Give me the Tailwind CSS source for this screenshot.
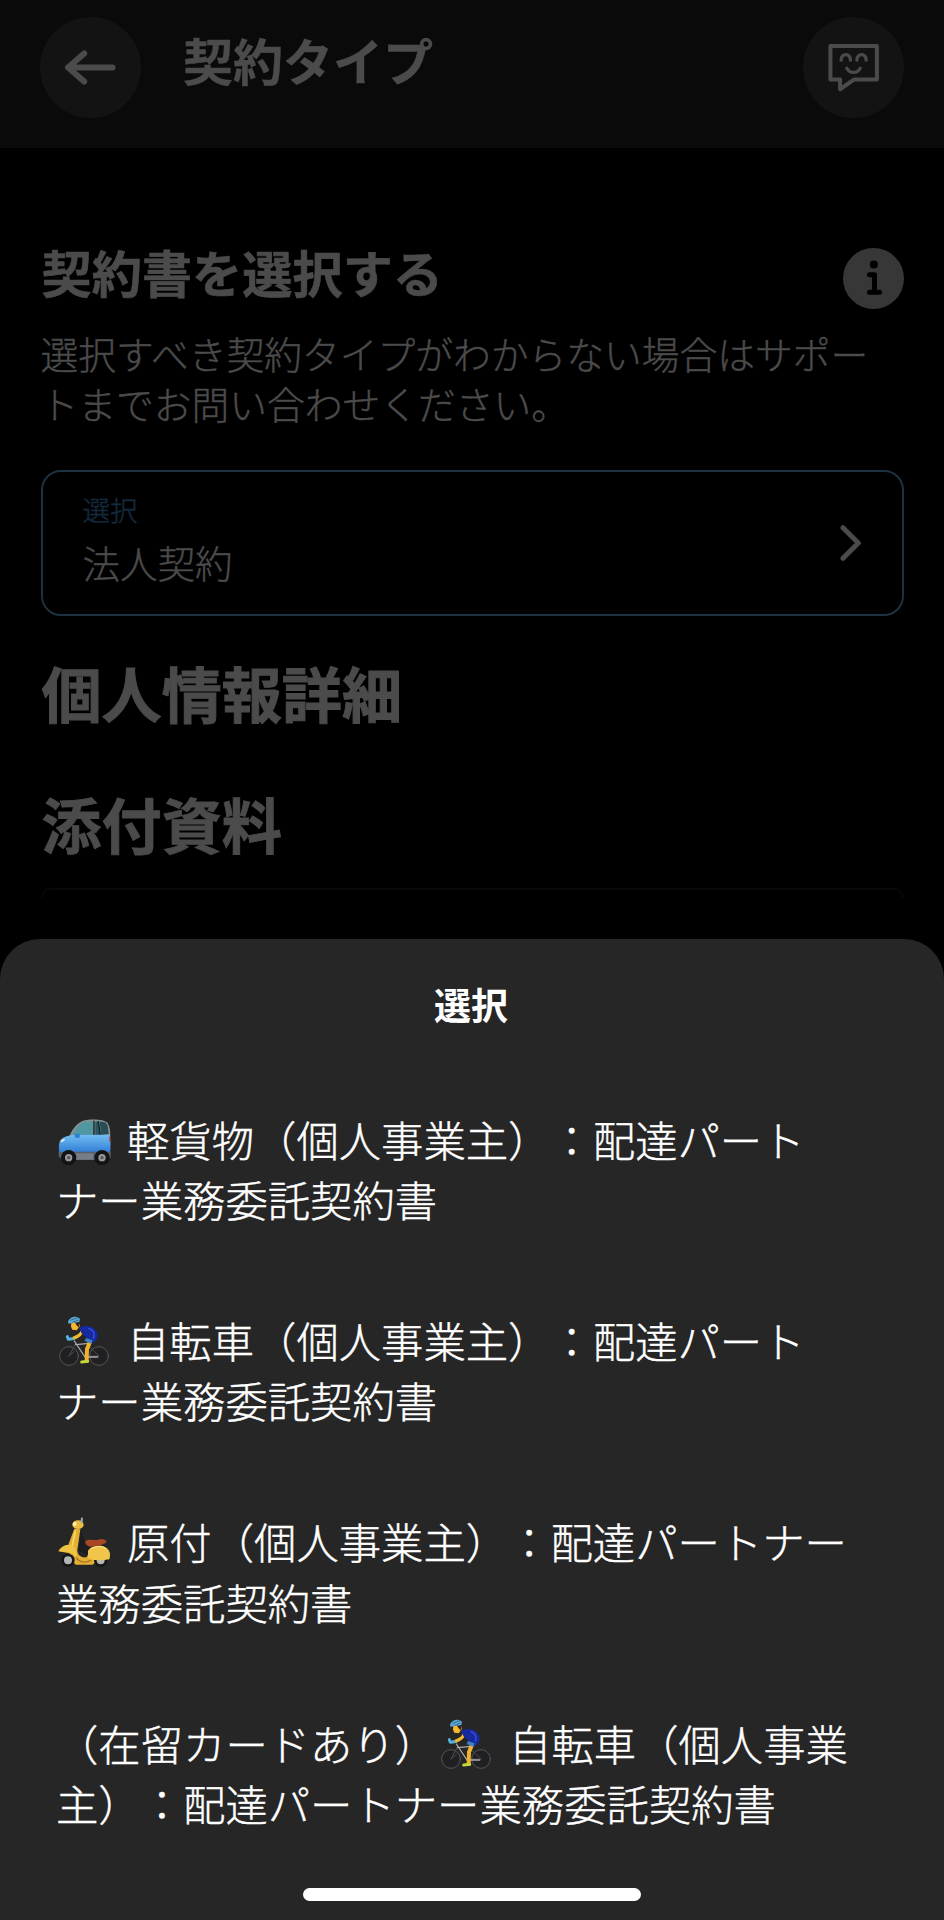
<!DOCTYPE html>
<html lang="ja">
<head>
    <meta charset="UTF-8">
    <meta name="viewport" content="width=device-width, initial-scale=1.0">
    <title>契約タイプ</title>
    <script src="https://cdn.jsdelivr.net/npm/@tailwindcss/browser@4"></script>
</head>
<body class="relative bg-black text-[#4b4b4b] font-['Noto_Sans_CJK_JP',sans-serif] h-[1920px] w-[944px] overflow-hidden [text-spacing-trim:space-all]">

    <!-- Shared icons -->
    <svg class="hidden">
        <symbol id="cyclist" viewBox="51 42 162 156">
            <g fill="none" stroke-linecap="round" stroke-linejoin="round">
                <g stroke="#55565a" stroke-width="3">
                    <circle cx="87" cy="168" r="28" fill="#202022" />
                    <circle cx="177" cy="168" r="28" fill="#202022" />
                </g>
                <path d="M87 168l20-37M87 168l16-14M177 168l-29-28M177 168h-32" stroke="#4a4b4f" stroke-width="3" />
                <path d="M103 123l32 48 17-42M107 134l41-4M135 171h38" stroke="#aaabb0" stroke-width="4" />
                <path d="M150 125l-9 22-1 36" stroke="#f2b229" stroke-width="12" />
                <path d="M125 186l18-2" stroke="#c5d63b" stroke-width="9" />
                <path d="M127 90c-2 12-8 18-27 25" stroke="#f2b92e" stroke-width="10" />
                <path d="M82 110l3 8 12-2" stroke="#55b2df" stroke-width="9" />
            </g>
            <path d="M117 83c22-10 43-4 52 11 9 15 2 26-9 35l-24-7c5-7 4-11-2-15-8-4-13-13-17-24z" fill="#16299f" />
            <path d="M145 85c15 4 21 16 15 31" fill="none" stroke="#3953dc" stroke-width="4" />
            <path d="M138 114l20 7-4 10-20-8z" fill="#3b82bf" />
            <path d="M94 68l22-3 4 13-10 13-13-2-4-9z" fill="#f4b72d" />
            <path d="M103 66l16-1-2 18-7-7z" fill="#35251c" />
            <path d="M84 66c3-14 25-22 36-9l-2 9-32 5z" fill="#5ba9d6" />
            <path d="M91 61l23-8M97 67l19-7" stroke="#244f6c" stroke-width="2" />
        </symbol>
    </svg>

    <!-- Header -->
    <header class="flex items-start h-[147.5px] bg-[#0a0a0a] px-[40px] pt-[17px]">
        <svg class="w-[101px] h-[101px]" viewBox="121 50 302 302" fill="none">
            <circle cx="272" cy="201" r="151" fill="#131313" />
            <path d="M338 201H205M253 159l-48 42 48 42" stroke="#4b4b4b" stroke-width="18" stroke-linecap="round" stroke-linejoin="round" />
        </svg>
        <h1 class="ml-[42px] mt-[17px] text-[50px] leading-[50px] font-bold [-webkit-text-stroke:0.4px_#4b4b4b]">契約タイプ</h1>
        <svg class="ml-auto w-[101px] h-[101px]" viewBox="69 50 302 302" fill="none" stroke="#4b4b4b" stroke-linecap="round" stroke-linejoin="round">
            <circle cx="220" cy="201" r="151" fill="#131313" stroke="none" />
            <path d="M151 137h139v100h-69l-41 29v-29h-29z" stroke-width="12" />
            <path d="M183 179c1-22 27-22 28 0M230 179c1-22 27-22 28 0M200 203c9 17 31 17 40 0" stroke-width="10" />
        </svg>
    </header>

    <main class="flex flex-col px-[40.5px] pt-[98.5px]">
        <div class="flex items-start justify-between">
            <h2 class="pl-px text-[50.2px] leading-[50px] font-bold [-webkit-text-stroke:0.6px_#4b4b4b]">契約書を選択する</h2>
            <svg class="mt-[2px] w-[61px] h-[61px]" viewBox="1090 55 182 182" fill="none">
                <circle cx="1181" cy="146" r="91" fill="#373737" />
                <circle cx="1182" cy="104" r="12" fill="#000" />
                <path d="M1169 135h15v52M1169 187h30" stroke="#000" stroke-width="15" stroke-linecap="round" stroke-linejoin="round" />
            </svg>
        </div>
        <p class="mt-[18.5px] text-[37.75px] leading-[50.5px] font-light whitespace-nowrap [-webkit-text-stroke:0.4px_#4b4b4b]">選択すべき契約タイプがわからない場合はサポー<br>トまでお問い合わせください。</p>

        <!-- Contract select -->
        <div class="mt-[41px] flex items-center justify-between h-[146px] rounded-[20px] border-2 border-[#1d3240] px-10">
            <div class="font-light">
                <div class="text-[27.5px] leading-[36px] text-[#142a3e] [-webkit-text-stroke:0.4px_#142a3e]">選択</div>
                <div class="mt-[10px] mb-[8px] text-[37.5px] leading-[50px] [-webkit-text-stroke:0.4px_#4b4b4b]">法人契約</div>
            </div>
            <svg class="w-[22px] h-9" viewBox="181 196 66 108" fill="none">
                <path d="M190 204l46 46-46 46" stroke="#4b4b4b" stroke-width="15" stroke-linecap="round" stroke-linejoin="round" />
            </svg>
        </div>

        <h2 class="mt-[46px] pl-px text-[60.1px] leading-[60px] font-bold [-webkit-text-stroke:1px_#4b4b4b]">個人情報詳細</h2>
        <h2 class="mt-[71px] pl-px text-[60.1px] leading-[60px] font-bold [-webkit-text-stroke:0.8px_#4b4b4b]">添付資料</h2>
        <div class="mt-[35px] h-[10px] rounded-t-[10px] border-2 border-b-0 border-[#080808]"></div>
    </main>

    <!-- Bottom sheet -->
    <section class="absolute inset-x-0 bottom-0 h-[981.5px] rounded-t-[40px] bg-[#262626] text-white">
        <h3 class="pt-[40px] pr-[2px] text-center text-[37px] leading-[50px] font-bold">選択</h3>
        <ul class="mt-[80px] ml-[56px] flex flex-col gap-[80.4px] text-[42.35px] leading-[60.5px] font-light whitespace-nowrap [-webkit-text-stroke:0.4px_#fff]">
            <li>
                <div class="flex items-center">
                    <svg class="ml-px w-[54px] h-[52px] mr-4" viewBox="51 39 162 156">
                        <defs>
                            <linearGradient id="paint" x1="0" y1="0" x2="0" y2="1">
                                <stop offset="0" stop-color="#72bdf4" />
                                <stop offset="1" stop-color="#2b78d2" />
                            </linearGradient>
                        </defs>
                        <path d="M88 108c13-29 30-45 51-48 27-3 54-1 64 9 7 11 8 26 8 41z" fill="#819193" />
                        <path d="M98 107c11-25 22-40 42-42h21v43z" fill="#4f98a1" />
                        <path d="M166 65h9l6 39-15 3z" fill="#285563" />
                        <path d="M179 65c18 0 21 4 24 13l3 24-22 3z" fill="#294d55" />
                        <path d="M162 62v47M175 63l6 42" stroke="#171d20" stroke-width="4" />
                        <path d="M58 128c4-14 17-20 40-23l111-1c4 18 3 38 1 57l-151 1c-3-10-3-24-1-34z" fill="url(#paint)" />
                        <path d="M56 155h156v17l-12 8H67l-11-11z" fill="#58616b" />
                        <path d="M103 160h57v19h-57z" fill="#777d84" />
                        <ellipse cx="112" cy="107" rx="8" ry="7" fill="#2f83cf" />
                        <path d="M61 126c3-8 9-10 14-8-2 6-7 9-14 8z" fill="#dbe9ef" />
                        <path d="M208 110h4v14h-4z" fill="#b22d25" />
                        <g fill="#98999b" stroke="#121314" stroke-width="12">
                            <circle cx="86" cy="173" r="17" />
                            <circle cx="186" cy="173" r="17" />
                        </g>
                        <circle cx="86" cy="173" r="5" fill="#55575a" />
                        <circle cx="186" cy="173" r="5" fill="#55575a" />
                    </svg>
                    <span>軽貨物（個人事業主）：配達パート</span>
                </div>
                <div>ナー業務委託契約書</div>
            </li>
            <li>
                <div class="flex items-center">
                    <svg class="ml-px w-[54px] h-[52px] mr-4"><use href="#cyclist" /></svg>
                    <span>自転車（個人事業主）：配達パート</span>
                </div>
                <div>ナー業務委託契約書</div>
            </li>
            <li>
                <div class="flex items-center">
                    <svg class="ml-px w-[54px] h-[52px] mr-4" viewBox="51 48 162 156">
                        <path d="M123 92l-7 62 26 10 12-32-18-4z" fill="#1d1d1e" />
                        <path d="M103 86l18 2-9 62c0 16 12 24 28 22l12-24 40 10-18 22-16 14h-50c-12-6-14-24-20-34l-33-6c4-10 16-18 30-20z" fill="#e3b033" />
                        <g fill="#b5b5b6" stroke="#151617" stroke-width="8">
                            <circle cx="84" cy="181" r="16" />
                            <circle cx="182" cy="181" r="16" />
                        </g>
                        <path d="M106 92l-9 45c-3 12 2 22 11 29" fill="none" stroke="#f7da69" stroke-width="5" />
                        <path d="M58 154c5-13 18-21 33-19 13 2 19 12 19 31-14-8-34-12-52-12z" fill="#efc344" />
                        <path d="M144 152c9-18 52-22 63 0 5 9 3 18 1 26-24 5-54 5-64-6z" fill="#efc54a" />
                        <path d="M153 147c13-10 34-11 45-1" fill="none" stroke="#fae080" stroke-width="4" />
                        <path d="M109 173c8 14 26 18 45 7" fill="none" stroke="#ad7521" stroke-width="4" />
                        <path d="M136 124c9-9 24-3 37-4 11-5 23-3 27 6-10 9-29 14-52 14-9-4-14-9-12-16z" fill="#a84724" />
                        <ellipse cx="114" cy="74" rx="17" ry="13" fill="#ecbc42" />
                        <circle cx="104" cy="72" r="6" fill="#fff0a9" />
                        <path d="M121 66l3-14 5 2-2 19" fill="#a8aaab" />
                    </svg>
                    <span>原付（個人事業主）：配達パートナー</span>
                </div>
                <div>業務委託契約書</div>
            </li>
            <li>
                <div class="flex items-center">
                    <span>（在留カードあり）</span>
                    <svg class="ml-[2px] w-[54px] h-[52px] mr-[16px]"><use href="#cyclist" /></svg>
                    <span>自転車（個人事業</span>
                </div>
                <div>主）：配達パートナー業務委託契約書</div>
            </li>
        </ul>
        <!-- Home indicator -->
        <div class="absolute bottom-[19px] left-[303px] w-[338px] h-[13px] rounded-full bg-white"></div>
    </section>

</body>
</html>
